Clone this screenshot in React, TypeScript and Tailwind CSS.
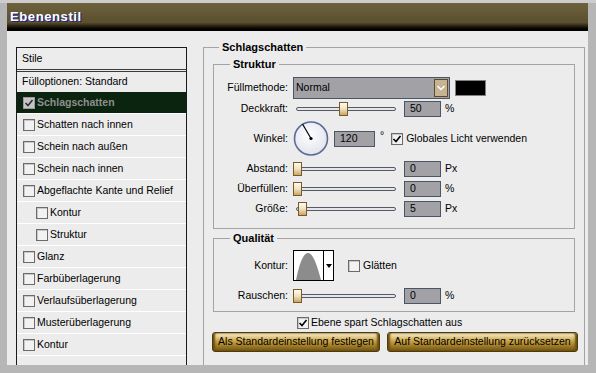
import React from "react";

const FONT = { fontFamily: '"Liberation Sans", Arial, sans-serif' };

function Check({ on = false, dim = false }: { on?: boolean; dim?: boolean }) {
  return (
    <span
      className={`flex h-[12px] w-[12px] shrink-0 items-center justify-center border ${
        dim ? "border-[#9a9a9a] bg-[#c4c4c4]" : "border-[#6b6b6b] bg-[#f2f2f2]"
      } shadow-[inset_1px_1px_0_#c8c8c8]`}
    >
      {on && (
        <svg width="10" height="10" viewBox="0 0 10 10">
          <path d="M1.5 5 L4 7.5 L8.5 2" fill="none" stroke={dim ? "#303030" : "#000"} strokeWidth="1.6" />
        </svg>
      )}
    </span>
  );
}

function Field({ value, w = 37 }: { value: string; w?: number }) {
  return (
    <div
      className="flex h-[16px] items-center border border-[#4b5566] bg-[#a2a2a6] pl-[5px] text-[10.5px] text-black"
      style={{ width: w }}
    >
      {value}
    </div>
  );
}

function Slider({ pos }: { pos: number }) {
  return (
    <div className="relative ml-[4px] h-[16px] w-[103px]">
      <div className="absolute left-[3px] right-0 top-[6px] h-[4px] rounded-full border border-[#555b66] bg-[#e6e6ea]" />
      <div
        className="absolute top-[1px] h-[14px] w-[9px] border border-[#7a5a22] bg-gradient-to-b from-[#fffaf0] via-[#f0e2c0] to-[#c8a668]"
        style={{ left: pos }}
      />
    </div>
  );
}

function Row({ label, children, h = 16 }: { label: string; children: React.ReactNode; h?: number }) {
  return (
    <div className="flex items-center" style={{ height: h }}>
      <div className="w-[75px] shrink-0 pr-[1px] text-right text-[10.5px]">{label}</div>
      {children}
    </div>
  );
}

function SliderRow({ label, pos, value, unit }: { label: string; pos: number; value: string; unit: string }) {
  return (
    <Row label={label}>
      <Slider pos={pos} />
      <div className="ml-[8px]">
        <Field value={value} />
      </div>
      <span className="ml-[4px] text-[10.5px]">{unit}</span>
    </Row>
  );
}

function GoldButton({ w, children }: { w: number; children: React.ReactNode }) {
  return (
    <button
      className="flex h-[20px] shrink-0 items-center justify-center rounded-[3px] border border-[#4e3a0c] bg-gradient-to-b from-[#fbf3d2] via-[#c9a240] via-45% to-[#735510] shadow-[inset_2px_0_2px_#6b4f10,inset_-2px_0_2px_#6b4f10,inset_0_1px_0_#fff8dc]"
      style={{ width: w }}
    >
      {children}
    </button>
  );
}

const items: { label: string; sub?: boolean; on?: boolean }[] = [
  { label: "Schlagschatten", on: true },
  { label: "Schatten nach innen" },
  { label: "Schein nach außen" },
  { label: "Schein nach innen" },
  { label: "Abgeflachte Kante und Relief" },
  { label: "Kontur", sub: true },
  { label: "Struktur", sub: true },
  { label: "Glanz" },
  { label: "Farbüberlagerung" },
  { label: "Verlaufsüberlagerung" },
  { label: "Musterüberlagerung" },
  { label: "Kontur" },
];

export default function App() {
  return (
    <div
      className="flex h-[373px] w-[596px] flex-col overflow-hidden border-t-[3px] border-[#cdcdcd] bg-[#b6b6b6] pb-[8px] pl-[7px] pr-[8px] text-black"
      style={FONT}
    >
      {/* title bar */}
      <div className="flex h-[28px] shrink-0 items-center bg-gradient-to-b from-[#6e623e] via-[#5a4f2e] via-70% to-[#000] pl-[3px]">
        <span className="text-[13px] font-bold tracking-[0.6px] text-white [text-shadow:1px_1px_0_#1c1c9a]">Ebenenstil</span>
      </div>

      <div className="flex flex-1 bg-[#ececec] pl-[9px] pr-[3px] pt-[10px]">
        {/* styles list */}
        <div className="mt-[6px] w-[171px] shrink-0 self-stretch border-x border-t border-[#1a1a1a] bg-[#ececec] text-[10.5px]">
          <div className="flex h-[24px] items-center border-b-[3px] border-double border-[#3a3a3a] pl-[5px]">Stile</div>
          <div className="flex h-[20px] items-center pl-[5px]">Fülloptionen: Standard</div>
          {items.map((it, i) => (
            <div
              key={i}
              className={`flex h-[22px] items-center gap-[2px] border-b border-white ${
                it.sub ? "pl-[19px]" : "pl-[6px]"
              } ${it.on ? "bg-[#0b2410] font-bold text-[#8e8e8e]" : ""}`}
            >
              <Check on={it.on} dim={it.on} />
              <span>{it.label}</span>
            </div>
          ))}
        </div>

        {/* right side */}
        <div className="ml-[16px] flex min-w-0 flex-1 flex-col">
          <fieldset className="min-w-0 flex-1 border-x border-t border-[#a4a4a4] p-0">
            <legend className="ml-[15px] h-[13px] px-[3px] text-[11px] font-bold leading-[13px]">Schlagschatten</legend>
            <div className="px-[9px]">
              <fieldset className="mt-[4px] min-w-0 border border-[#a4a4a4] p-0">
                <legend className="ml-[16px] h-[13px] px-[3px] text-[11px] font-bold leading-[13px]">Struktur</legend>
                <div className="flex flex-col pb-[11px] pt-[6px]">
                  <Row label="Füllmethode:" h={22}>
                    <div className="ml-[4px] flex h-[22px] w-[157px] items-center border border-[#4b5566] bg-[#a2a2a6]">
                      <span className="ml-[2px] flex-1 text-[10.5px]">Normal</span>
                      <div className="mr-[1px] flex h-[18px] w-[14px] items-center justify-center border border-[#5a4a30] bg-[#c6b392]">
                        <svg width="10" height="8" viewBox="0 0 10 8">
                          <path d="M1.5 2 L5 5.5 L8.5 2" fill="none" stroke="#fff" strokeWidth="1.5" />
                        </svg>
                      </div>
                    </div>
                    <div className="ml-[5px] h-[16px] w-[31px] border border-[#808080] bg-black" />
                  </Row>
                  <div className="mt-[2px]">
                    <SliderRow label="Deckkraft:" pos={46} value="50" unit="%" />
                  </div>
                  <div className="mt-[3px]">
                    <Row label="Winkel:" h={37}>
                      <svg className="ml-[4px] shrink-0" width="36" height="37" viewBox="0 0 36 37">
                        <defs>
                          <radialGradient id="dial" cx="45%" cy="40%" r="60%">
                            <stop offset="0%" stopColor="#ffffff" />
                            <stop offset="100%" stopColor="#e2e4ec" />
                          </radialGradient>
                        </defs>
                        <circle cx="18" cy="18.5" r="16.5" fill="url(#dial)" stroke="#5b6a98" strokeWidth="1.6" />
                        <line x1="18" y1="18.5" x2="9.5" y2="4" stroke="#000" strokeWidth="1.2" />
                        <circle cx="18" cy="18.5" r="1.6" fill="#000" />
                      </svg>
                      <div className="ml-[5px]">
                        <Field value="120" w={41} />
                      </div>
                      <span className="ml-[5px] -mt-[6px] text-[10.5px]">°</span>
                      <div className="ml-[7px] flex items-center gap-[3px] text-[10.5px]">
                        <Check on />
                        <span>Globales Licht verwenden</span>
                      </div>
                    </Row>
                  </div>
                  <div className="mt-[4px]">
                    <SliderRow label="Abstand:" pos={0} value="0" unit="Px" />
                  </div>
                  <div className="mt-[4px]">
                    <SliderRow label="Überfüllen:" pos={0} value="0" unit="%" />
                  </div>
                  <div className="mt-[4px]">
                    <SliderRow label="Größe:" pos={5} value="5" unit="Px" />
                  </div>
                </div>
              </fieldset>

              <fieldset className="mt-[3px] min-w-0 border border-[#a4a4a4] p-0">
                <legend className="ml-[16px] h-[13px] px-[3px] text-[11px] font-bold leading-[13px]">Qualität</legend>
                <div className="flex flex-col pb-[7px] pt-[5px]">
                  <Row label="Kontur:" h={31}>
                    <div className="ml-[4px] flex h-[31px] w-[41px] border border-black bg-white">
                      <svg width="29" height="29" viewBox="0 0 29 29">
                        <path d="M2 29 C 5 14, 9 2, 14 2 C 19 2, 23 14, 27 29 Z" fill="#8c8c8c" />
                      </svg>
                      <div className="flex flex-1 items-center justify-center border-l border-black">
                        <svg width="6" height="4" viewBox="0 0 6 4">
                          <path d="M0 0 L6 0 L3 4 Z" fill="#000" />
                        </svg>
                      </div>
                    </div>
                    <div className="ml-[14px] flex items-center gap-[3px] text-[10.5px]">
                      <Check />
                      <span>Glätten</span>
                    </div>
                  </Row>
                  <div className="mt-[7px]">
                    <SliderRow label="Rauschen:" pos={0} value="0" unit="%" />
                  </div>
                </div>
              </fieldset>

              <div className="ml-[84px] mt-[4px] flex h-[13px] items-center gap-[2px] text-[10.5px] leading-[13px]">
                <Check on />
                <span>Ebene spart Schlagschatten aus</span>
              </div>

              <div className="-ml-[1px] -mr-[4px] mt-[3px] flex gap-[7px] text-[10.5px]">
                <GoldButton w={168}>Als Standardeinstellung festlegen</GoldButton>
                <GoldButton w={191}>Auf Standardeinstellung zurücksetzen</GoldButton>
              </div>
            </div>
          </fieldset>
        </div>
      </div>
    </div>
  );
}
